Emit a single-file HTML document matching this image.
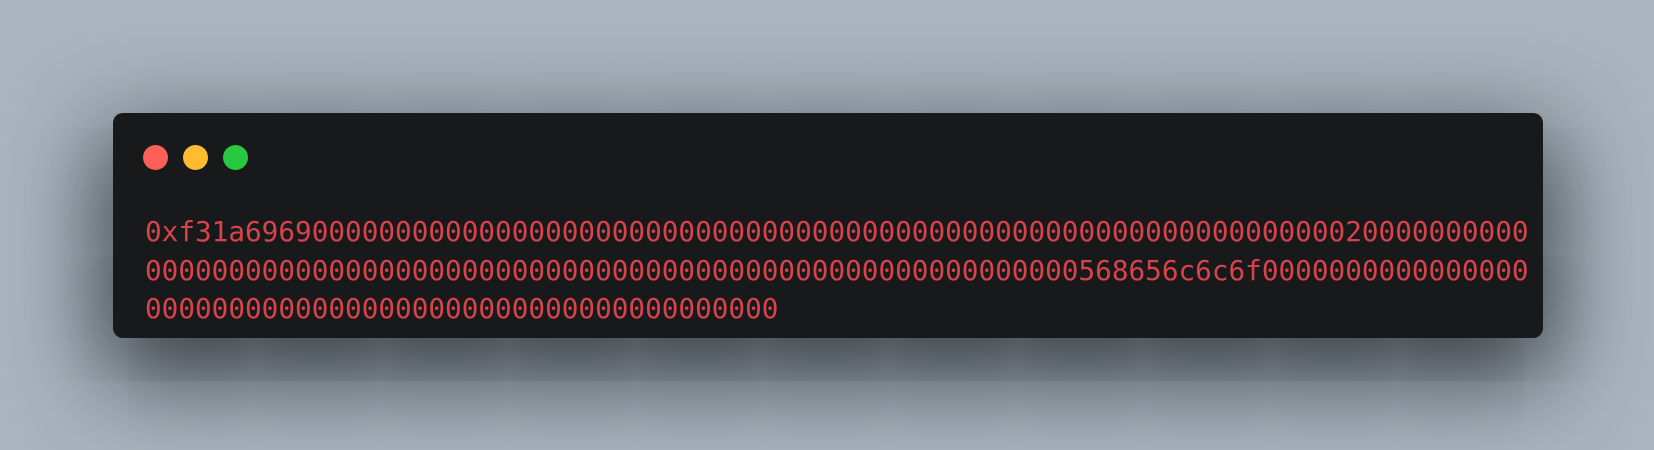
<!DOCTYPE html>
<html><head><meta charset="utf-8"><style>
html,body{margin:0;padding:0;}
body{width:1654px;height:450px;background:#a9b4be;position:relative;overflow:hidden;}
.win{position:absolute;left:113px;top:113px;width:1430px;height:225px;background:#18191b;border-radius:10px;box-shadow:0 30px 90px 10px rgba(20,25,30,0.8);}
.dot{position:absolute;top:144.5px;width:25px;height:25px;border-radius:50%;}
pre{position:absolute;left:145px;top:213px;margin:0;font-family:"DejaVu Sans Mono","Liberation Mono",monospace;font-size:27.7px;line-height:38.5px;color:#d8434b;}
</style></head><body>
<div class="win"></div>
<div class="dot" style="left:142.5px;background:#fe5f57"></div>
<div class="dot" style="left:182.5px;background:#febc2e"></div>
<div class="dot" style="left:222.5px;background:#28c840"></div>
<pre>0xf31a69690000000000000000000000000000000000000000000000000000000000000020000000000
00000000000000000000000000000000000000000000000000000000568656c6c6f0000000000000000
00000000000000000000000000000000000000</pre>
</body></html>
